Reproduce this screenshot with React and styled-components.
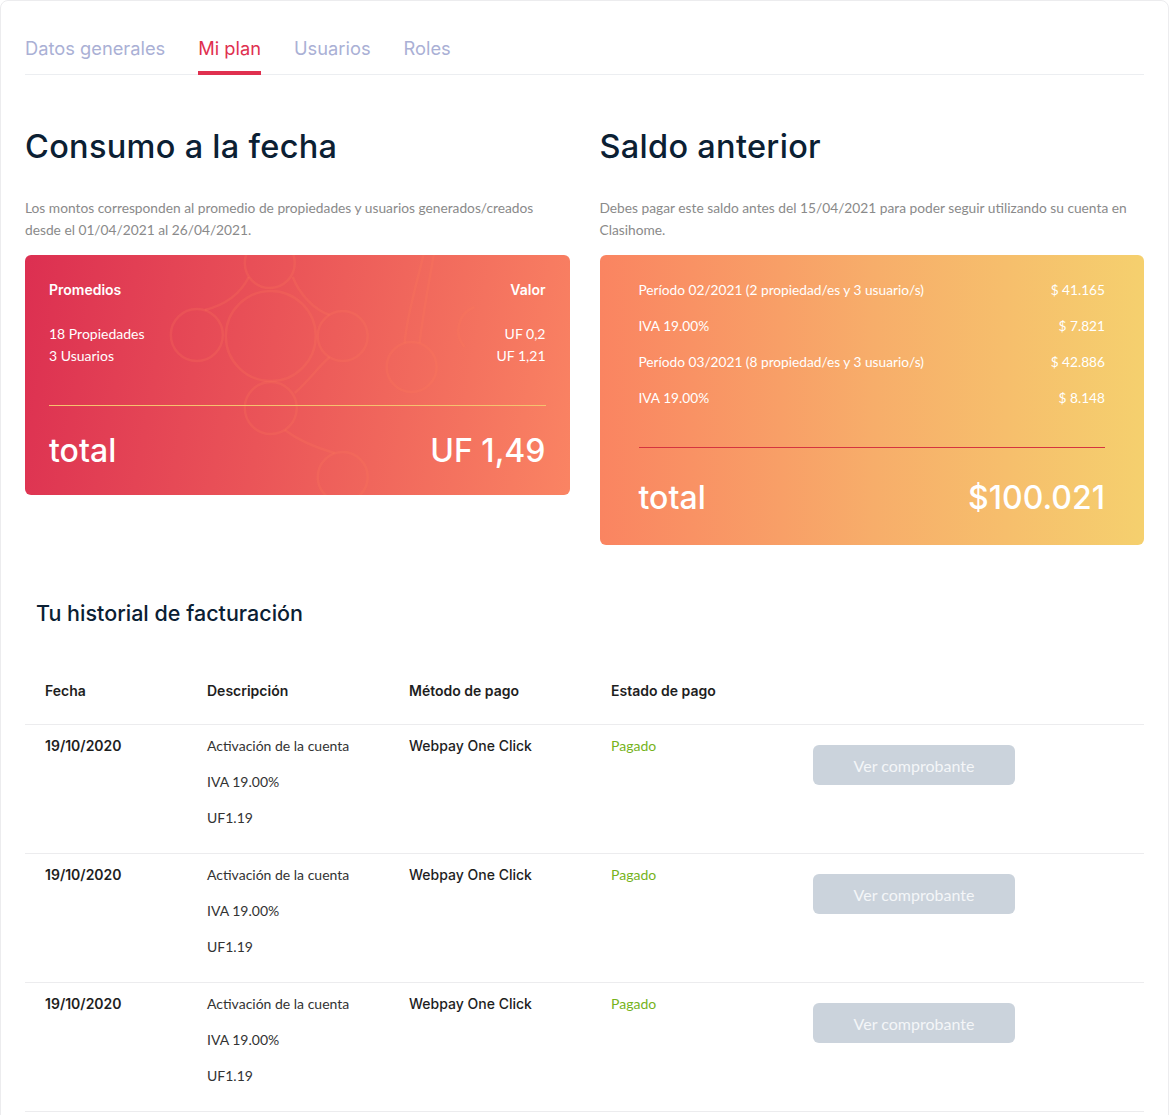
import React from "react";
import styled, { createGlobalStyle } from "styled-components";

const GlobalStyle = createGlobalStyle`
  body {
    margin: 0;
    background: #fff;
    font-family: "Lato", "Open Sans", sans-serif;
  }
  * { box-sizing: border-box; }
`;

const Panel = styled.div`
  border: 1px solid #ececee;
  border-radius: 8px;
  padding: 0 24px;
  min-height: 1130px;
  background: #fff;
`;

const Tabs = styled.nav`
  display: flex;
  gap: 33px;
  padding-top: 36px;
  border-bottom: 1px solid #eceef1;
`;

const Tab = styled.div`
  font-family: "Inter", sans-serif;
  font-size: 18.3px;
  line-height: 22px;
  padding-bottom: 12px;
  color: ${(p) => (p.$active ? "#e0304f" : "#aab0d5")};
  border-bottom: 4px solid ${(p) => (p.$active ? "#e0304f" : "transparent")};
  border-radius: 2px 2px 0 0;
  margin-bottom: -1px;
  cursor: pointer;
`;

const Columns = styled.div`
  display: grid;
  grid-template-columns: 1fr 1fr;
  gap: 30px;
  align-items: start;
  margin-top: 52px;
`;

const Heading = styled.h1`
  margin: 0;
  font-family: "Inter", sans-serif;
  font-weight: 500;
  font-size: 32.5px;
  line-height: 40px;
  color: #0b2033;
  letter-spacing: 0.3px;
`;

const Note = styled.p`
  margin: 30px 0 14px;
  font-size: 13.75px;
  line-height: 22px;
  color: #8a8a8a;
  min-height: 44px;
`;

const Card = styled.div`
  position: relative;
  overflow: hidden;
  border-radius: 6px;
  color: #fff;
  padding: ${(p) => p.$pad};
  background: ${(p) => p.$bg};
`;

const Deco = styled.svg`
  position: absolute;
  inset: 0;
  width: 100%;
  height: 100%;
  pointer-events: none;
`;

const CardBody = styled.div`
  position: relative;
`;

const HeadRow = styled.div`
  display: flex;
  justify-content: space-between;
  font-family: "Inter", sans-serif;
  font-weight: 600;
  font-size: 14px;
  line-height: 22px;
  margin-bottom: 22px;
`;

const Line = styled.div`
  display: flex;
  justify-content: space-between;
  font-size: ${(p) => p.$size || "14px"};
  line-height: ${(p) => p.$lh || "22px"};
`;

const Rule = styled.hr`
  border: none;
  height: 1px;
  background: ${(p) => p.$color};
  margin: ${(p) => p.$margin};
`;

const Total = styled.div`
  display: flex;
  justify-content: space-between;
  font-family: "Inter", sans-serif;
  font-weight: 500;
  font-size: 32px;
  line-height: 40px;
`;

const SubHeading = styled.h2`
  margin: 54px 0 0 11px;
  font-family: "Inter", sans-serif;
  font-weight: 500;
  font-size: 21.5px;
  line-height: 28px;
  color: #0b2033;
`;

const Table = styled.div`
  margin-top: 54px;
`;

const Row = styled.div`
  display: grid;
  grid-template-columns: 162px 202px 202px 202px 1fr;
  padding: ${(p) => (p.$head ? "0 0 23px" : "12px 0 26px")};
  border-bottom: 1px solid #ececee;

  & > div {
    padding-left: 20px;
  }
`;

const HeadCell = styled.div`
  font-family: "Inter", sans-serif;
  font-weight: 600;
  font-size: 14px;
  line-height: 20px;
  color: #1e1e1e;
`;

const Cell = styled.div`
  display: flex;
  flex-direction: column;
  gap: 18px;
  font-size: 14px;
  line-height: 18px;
  color: ${(p) => p.$color || "#333"};
  font-family: ${(p) => (p.$geo ? `"Inter", sans-serif` : `"Lato", sans-serif`)};
  font-weight: ${(p) => p.$weight || 400};
`;

const Button = styled.button`
  margin-top: 8px;
  width: 202px;
  height: 40px;
  border: none;
  border-radius: 6px;
  background: #cbd3dc;
  color: #f4f6f8;
  font-family: "Lato", sans-serif;
  font-size: 16px;
  cursor: pointer;
`;

const Molecule = () => (
  <Deco viewBox="0 0 545 240" preserveAspectRatio="none">
    <g fill="none" stroke="rgba(255,125,90,0.22)" strokeWidth="2.5">
      <circle cx="245" cy="8" r="25" />
      <circle cx="246" cy="81" r="45" />
      <circle cx="172" cy="80" r="26" />
      <circle cx="318" cy="81" r="25" />
      <circle cx="246" cy="153" r="26" />
      <circle cx="318" cy="222" r="25" />
      <circle cx="387" cy="112" r="25" />
      <path d="M440 92 A25 25 0 0 1 450 52" />
      <path d="M180 55 C200 50 215 40 224 22" />
      <path d="M268 22 C275 40 290 55 305 60" />
      <path d="M270 138 C285 125 295 110 305 102" />
      <path d="M260 175 C280 190 300 195 310 198" />
      <path d="M380 88 C382 60 392 30 400 -5" />
      <path d="M395 88 C398 60 404 30 410 -5" />
    </g>
  </Deco>
);

const rows = [1, 2, 3];

export default function App() {
  return (
    <>
      <GlobalStyle />
      <Panel>
        <Tabs>
          <Tab>Datos generales</Tab>
          <Tab $active>Mi plan</Tab>
          <Tab>Usuarios</Tab>
          <Tab>Roles</Tab>
        </Tabs>

        <Columns>
          <div>
            <Heading>Consumo a la fecha</Heading>
            <Note>
              Los montos corresponden al promedio de propiedades y usuarios
              generados/creados desde el 01/04/2021 al 26/04/2021.
            </Note>
            <Card
              $pad="24px 24px 24px"
              $bg="linear-gradient(100deg, #dc2f51 0%, #ea5458 45%, #fa8463 100%)"
            >
              <Molecule />
              <CardBody>
                <HeadRow>
                  <span>Promedios</span>
                  <span>Valor</span>
                </HeadRow>
                <Line>
                  <span>18 Propiedades</span>
                  <span>UF 0,2</span>
                </Line>
                <Line>
                  <span>3 Usuarios</span>
                  <span>UF 1,21</span>
                </Line>
                <Rule $color="#f6c26f" $margin="38px 0 25px" />
                <Total>
                  <span>total</span>
                  <span>UF 1,49</span>
                </Total>
              </CardBody>
            </Card>
          </div>

          <div>
            <Heading>Saldo anterior</Heading>
            <Note>
              Debes pagar este saldo antes del 15/04/2021 para poder seguir
              utilizando su cuenta en Clasihome.
            </Note>
            <Card
              $pad="17px 39px 27px"
              $bg="linear-gradient(90deg, #fa8461 0%, #f7ad6a 50%, #f5d06e 100%)"
            >
              <CardBody>
                <Line $lh="36px" $size="13.7px">
                  <span>Período 02/2021 (2 propiedad/es y 3 usuario/s)</span>
                  <span>$ 41.165</span>
                </Line>
                <Line $lh="36px" $size="13.7px">
                  <span>IVA 19.00%</span>
                  <span>$ 7.821</span>
                </Line>
                <Line $lh="36px" $size="13.7px">
                  <span>Período 03/2021 (8 propiedad/es y 3 usuario/s)</span>
                  <span>$ 42.886</span>
                </Line>
                <Line $lh="36px" $size="13.7px">
                  <span>IVA 19.00%</span>
                  <span>$ 8.148</span>
                </Line>
                <Rule $color="#d5343f" $margin="31px 0 30px" />
                <Total>
                  <span>total</span>
                  <span>$100.021</span>
                </Total>
              </CardBody>
            </Card>
          </div>
        </Columns>

        <SubHeading>Tu historial de facturación</SubHeading>

        <Table>
          <Row $head>
            <HeadCell>Fecha</HeadCell>
            <HeadCell>Descripción</HeadCell>
            <HeadCell>Método de pago</HeadCell>
            <HeadCell>Estado de pago</HeadCell>
            <div />
          </Row>
          {rows.map((r) => (
            <Row key={r}>
              <Cell $geo $weight={600} $color="#1e1e1e">
                19/10/2020
              </Cell>
              <Cell>
                <span>Activación de la cuenta</span>
                <span>IVA 19.00%</span>
                <span>UF1.19</span>
              </Cell>
              <Cell $geo $weight={500} $color="#1e1e1e">
                Webpay One Click
              </Cell>
              <Cell $color="#76b31b">Pagado</Cell>
              <div>
                <Button>Ver comprobante</Button>
              </div>
            </Row>
          ))}
        </Table>
      </Panel>
    </>
  );
}
